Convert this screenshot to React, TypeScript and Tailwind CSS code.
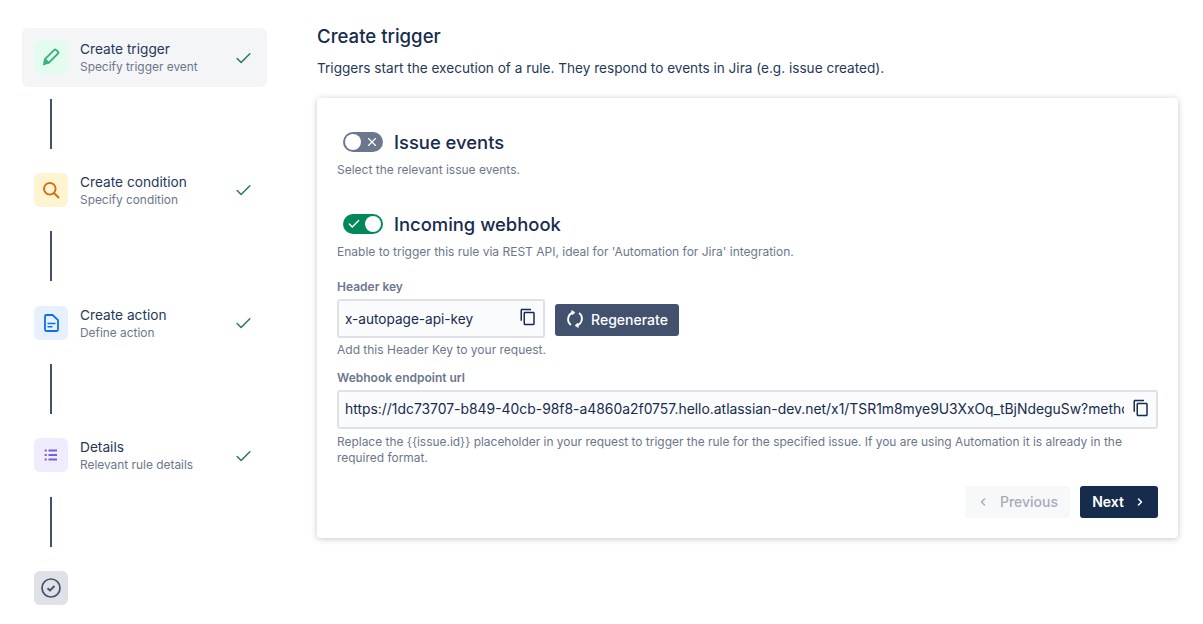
import React from 'react';
import { Check, ChevronLeft, ChevronRight, X } from 'lucide-react';
import { MdContentCopy } from 'react-icons/md';

const steps = [
  { title: 'Create trigger', sub: 'Specify trigger event', tile: 'bg-[#e3fcef]', active: true, icon: <PencilIcon /> },
  { title: 'Create condition', sub: 'Specify condition', tile: 'bg-[#fff4d1]', icon: <SearchIcon /> },
  { title: 'Create action', sub: 'Define action', tile: 'bg-[#e6f0ff]', icon: <DocIcon /> },
  { title: 'Details', sub: 'Relevant rule details', tile: 'bg-[#f0ecfd]', icon: <ListIcon /> },
];

function PencilIcon() {
  return (
    <svg width="18" height="18" viewBox="0 0 18 18" fill="none">
      <path d="M12.3 1.8a1.2 1.2 0 0 1 1.7 0l2 2a1.2 1.2 0 0 1 0 1.7l-9.3 9.3-3.7-3.7z" stroke="#36b37e" strokeWidth="1.9" strokeLinejoin="round" />
      <path d="M2.2 10.6l5 5-3.2.9-3.2.9z" fill="#36b37e" />
    </svg>
  );
}

function SearchIcon() {
  return (
    <svg width="18" height="18" viewBox="0 0 18 18" fill="none">
      <circle cx="7.8" cy="7.8" r="5.8" stroke="#cf6f10" strokeWidth="1.9" />
      <path d="M12 12l4.5 4.5" stroke="#cf6f10" strokeWidth="1.9" strokeLinecap="round" />
    </svg>
  );
}

function DocIcon() {
  return (
    <svg width="15" height="18" viewBox="0 0 15 18" fill="none">
      <path d="M2.4 1h6.2l5.4 5.2v9.4a1.4 1.4 0 0 1-1.4 1.4h-10.2a1.4 1.4 0 0 1-1.4-1.4v-13.2a1.4 1.4 0 0 1 1.4-1.4z" stroke="#0c6fe8" strokeWidth="1.8" strokeLinejoin="round" />
      <path d="M3.5 9.5h8M3.5 12.8h5" stroke="#0c6fe8" strokeWidth="1.6" />
    </svg>
  );
}

function ListIcon() {
  return (
    <svg width="14" height="12" viewBox="0 0 14 12" fill="none" stroke="#7a5fd0" strokeWidth="1.8">
      <path d="M4.5 1.5h8.5M4.5 6h8.5M4.5 10.5h8.5" />
      <path d="M.7 1.5h2M.7 6h2M.7 10.5h2" />
    </svg>
  );
}

function RegenIcon() {
  return (
    <svg width="18" height="18" viewBox="0 0 18 18" fill="none" stroke="white" strokeWidth="1.9">
      <path d="M7.5 2.5a7 7 0 0 0-2.6 12.4" />
      <path d="M5.6 0.4l3.4 2.1-3 2.4z" fill="white" strokeWidth="0.6" />
      <path d="M10.5 15.5a7 7 0 0 0 2.6-12.4" />
      <path d="M12.4 17.6l-3.4-2.1 3-2.4z" fill="white" strokeWidth="0.6" />
    </svg>
  );
}

function Connector() {
  return <div className="my-3 ml-[28px] h-[50px] w-[2px] bg-[#42526e]" />;
}

function Toggle({ on }: { on?: boolean }) {
  return (
    <div className={`flex h-5 w-10 items-center rounded-full p-[2px] ${on ? 'justify-end bg-[#00875a]' : 'bg-[#6b778c]'}`}>
      {on && <Check className="mr-[4px] h-[14px] w-[14px] text-white" strokeWidth={2.5} />}
      <div className="h-4 w-4 rounded-full bg-white" />
      {!on && <X className="ml-[4px] h-[14px] w-[14px] text-white" strokeWidth={2} />}
    </div>
  );
}

export default function App() {
  return (
    <div className="flex h-[624px] overflow-hidden bg-white font-['Inter',sans-serif] text-[#172b4d]">
      {/* Steps */}
      <div className="ml-[22px] mt-[28px] w-[245px] shrink-0">
        {steps.map(s => (
          <div key={s.title}>
            <div className={`flex h-[58.67px] items-center rounded-md pl-3 pr-[14px] ${s.active ? 'bg-[#f4f5f7]' : ''}`}>
              <div className={`flex h-[34px] w-[34px] items-center justify-center rounded-md ${s.tile}`}>{s.icon}</div>
              <div className="ml-3 min-w-0 flex-1 pt-[2px]">
                <div className="text-[13.7px] leading-[17px] text-[#253858]">{s.title}</div>
                <div className="text-[11.9px] leading-[17px] text-[#6b778c]">{s.sub}</div>
              </div>
              <Check className="mt-[2px] h-[19px] w-[19px] text-[#2f7a5f]" strokeWidth={2} />
            </div>
            <Connector />
          </div>
        ))}
        <div className="ml-3 mt-6 flex h-[34px] w-[34px] items-center justify-center rounded-md bg-[#dfe1e6]">
          <svg width="20" height="20" viewBox="0 0 20 20" fill="none" stroke="#42526e">
            <circle cx="10" cy="10" r="9" strokeWidth="1.7" />
            <path d="M6.5 10.2l2.5 2.3 4.5-4.5" strokeWidth="1.9" />
          </svg>
        </div>
      </div>

      {/* Main */}
      <div className="ml-[50px] w-[861px] shrink-0">
        <h1 className="mt-[24px] text-[18.6px] font-medium leading-[24px]">Create trigger</h1>
        <p className="mt-[10px] text-[13.6px] leading-[20px] text-[#253858]">
          Triggers start the execution of a rule. They respond to events in Jira (e.g. issue created).
        </p>
        <div className="mt-[20px] h-[440px] rounded bg-white px-5 pt-[32px] shadow-[0_1px_6px_rgba(9,30,66,0.25)]">
          <div className="flex items-center gap-[11px] pl-[6px]">
            <Toggle />
            <span className="text-[18.4px] font-medium leading-[24px]">Issue events</span>
          </div>
          <p className="mt-[8px] text-[12px] leading-[16px] text-[#6b778c]">Select the relevant issue events.</p>

          <div className="mt-[34px] flex items-center gap-[11px] pl-[6px]">
            <Toggle on />
            <span className="text-[18.4px] font-medium leading-[24px]">Incoming webhook</span>
          </div>
          <p className="mt-[8px] text-[12px] leading-[16px] text-[#6b778c]">
            Enable to trigger this rule via REST API, ideal for 'Automation for Jira' integration.
          </p>

          <div className="mt-[17px] text-[12px] font-semibold leading-[20px] text-[#6b778c]">Header key</div>
          <div className="mt-[2px] flex items-start gap-[10px]">
            <div className="flex h-[39px] w-[208px] items-center justify-between rounded-[3px] border-2 border-[#dfe1e6] bg-[#fafbfc] pl-[6px] pr-[6px]">
              <span className="pt-[1px] text-[13.6px] text-[#172b4d]">x-autopage-api-key</span>
              <MdContentCopy className="mb-[3px] h-[18px] w-[18px] text-[#172b4d]" />
            </div>
            <button className="mt-[5px] flex h-8 w-[124px] items-center justify-center gap-[7px] rounded-[3px] bg-[#42526e] pb-[2px] text-[14px] font-medium text-white">
              <RegenIcon />
              Regenerate
            </button>
          </div>
          <p className="mt-[4px] text-[12px] leading-[16px] text-[#6b778c]">Add this Header Key to your request.</p>

          <div className="mt-[10px] text-[12px] font-semibold leading-[20px] text-[#6b778c]">Webhook endpoint url</div>
          <div className="mt-[2px] flex h-[39px] w-[821px] items-center rounded-[3px] border-2 border-[#dfe1e6] bg-[#fafbfc] pl-[6px] pr-[6px]">
            <span className="min-w-0 flex-1 overflow-hidden whitespace-nowrap text-[13.9px] text-[#172b4d]">
              https://1dc73707-b849-40cb-98f8-a4860a2f0757.hello.atlassian-dev.net/x1/TSR1m8mye9U3XxOq_tBjNdeguSw?method=POST
            </span>
            <MdContentCopy className="mb-[3px] ml-[8px] h-[18px] w-[18px] shrink-0" />
          </div>
          <p className="mt-[5px] w-[800px] text-[11.95px] leading-[16px] text-[#6b778c]">
            {'Replace the {{issue.id}} placeholder in your request to trigger the rule for the specified issue. If you are using Automation it is already in the required format.'}
          </p>

          <div className="mt-[20px] flex justify-end gap-[10px]">
            <button className="flex h-8 w-[105px] items-center justify-center gap-[11px] rounded-[3px] bg-[#f7f8f9] pb-[1px] text-[14px] font-medium text-[#a5adba]">
              <ChevronLeft className="h-3 w-3" strokeWidth={3} />
              Previous
            </button>
            <button className="flex h-8 w-[78px] items-center justify-center gap-[10px] rounded-[3px] bg-[#172b4d] pb-[1px] text-[14px] font-semibold text-white">
              Next
              <ChevronRight className="h-3 w-3" strokeWidth={3} />
            </button>
          </div>
        </div>
      </div>
    </div>
  );
}
